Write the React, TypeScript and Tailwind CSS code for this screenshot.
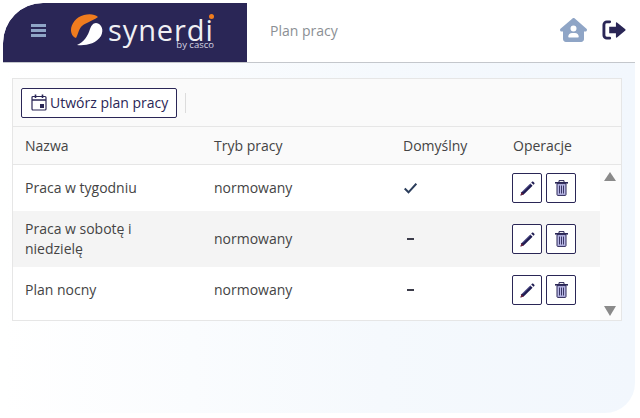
import { FaHouseUser } from "react-icons/fa6";

const rows = [
  { name: "Praca w tygodniu", mode: "normowany", isDefault: true, h: "h-[46px]", bg: "bg-white" },
  { name: "Praca w sobotę i niedzielę", mode: "normowany", isDefault: false, h: "h-[56px]", bg: "bg-[#f4f4f4]" },
  { name: "Plan nocny", mode: "normowany", isDefault: false, h: "h-[46px]", bg: "bg-white" },
];

const CalendarIcon = () => (
  <svg width="16" height="17" viewBox="0 0 16 17" fill="none" stroke="#2a2656" strokeWidth="1.2">
    <rect x="1" y="2.5" width="14" height="13.5" rx="1" />
    <path d="M1 6h14" strokeWidth="1.4" />
    <path d="M4.5 0.5v3.5M11.5 0.5v3.5" strokeWidth="1.6" />
    <rect x="9" y="10" width="4" height="4" fill="#2a2656" stroke="none" />
  </svg>
);

const LogoutIcon = () => (
  <svg width="24" height="22" viewBox="0 0 25 21">
    <path d="M8 2H5a3 3 0 0 0-3 3v11a3 3 0 0 0 3 3h3" fill="none" stroke="#2a2656" strokeWidth="3" strokeLinecap="round" />
    <path d="M7.5 7h7V3.2c0-.6.7-.9 1.1-.5l8.7 7.1c.4.4.4.9 0 1.3l-8.7 7.2c-.4.4-1.1.1-1.1-.5V14h-7z" fill="#2a2656" />
  </svg>
);

const PencilIcon = () => (
  <svg width="15" height="15" viewBox="0 0 15 15">
    <path d="M.5 14.5l.9-3.2 8.9-8.9 2.3 2.3-8.9 8.9z" fill="#1f1c52" />
    <path d="M2.6 10.8l8-8" stroke="#8f8cc8" strokeWidth="0.7" />
    <path d="M.5 14.5l.9-3.2 2.3 2.3z" fill="#6b1f3a" />
    <path d="M11.2 1.5l.8-.8c.4-.4.9-.4 1.3 0l1 1c.4.4.4.9 0 1.3l-.8.8z" fill="#1f1c52" />
  </svg>
);

const TrashIcon = () => (
  <svg width="13" height="16" viewBox="0 0 13 16">
    <path d="M4 2V.6h5V2" fill="none" stroke="#2a2656" strokeWidth="1" />
    <rect x="0" y="2" width="13" height="1.6" fill="#2a2656" />
    <path d="M2 3.6h9v11a.8.8 0 0 1-.8.8H2.8a.8.8 0 0 1-.8-.8z" fill="#b9b8e6" stroke="#2a2656" strokeWidth="1" />
    <path d="M4.5 5.5v8M6.5 5.5v8M8.5 5.5v8" stroke="#2a2656" strokeWidth="0.9" />
  </svg>
);

const CheckIcon = () => (
  <svg width="13" height="11" viewBox="0 0 13 11" fill="none" stroke="#2c3e5c" strokeWidth="2">
    <path d="M.7 5.5l3.8 3.8 7.8-8.6" />
  </svg>
);

const IconButton = ({ children }: { children: React.ReactNode }) => (
  <button className="flex h-[30px] w-[30px] items-center justify-center rounded-[2px] border border-[#2a2656] bg-white">
    {children}
  </button>
);

export default function App() {
  return (
    <div className="h-[418px] w-[640px] bg-white pb-[5px] pl-[3px] pr-[5px] pt-[3px] font-['Open_Sans',sans-serif] text-[14px] text-[#444]">
      <div className="h-[410px] overflow-hidden rounded-br-[30px] rounded-tl-[40px] bg-gradient-to-r from-white via-[#f5f9fd] via-60% to-[#f2f7fd]">
        <header className="flex h-[60px] items-stretch border-b border-[#c4c7cc] bg-white">
          <div className="flex h-[59px] w-[244px] items-center rounded-tl-[40px] bg-[#2a2656] pb-[4px]">
            <div className="ml-[28px] flex h-[13px] w-[15px] flex-col justify-between">
              <span className="h-[3px] bg-[#8fa5c6]" />
              <span className="h-[3px] bg-[#8fa5c6]" />
              <span className="h-[3px] bg-[#8fa5c6]" />
            </div>
            <svg className="ml-[25px]" width="33" height="33" viewBox="0 0 33 33">
              <path d="M27 3C24 0 18-.5 13 1 5 3 0 10 0 16c0 4 2 7 5 8 2-3 2-7 5-11 3-4 10-5 17-10z" fill="#f07c1e" />
              <path d="M6 31c8 1 19-1 24-9 3-6 1-12-5-13-3 0-5 3-6 6-2 7-6 13-13 16z" fill="#fff" />
            </svg>
            <div className="relative ml-[4px] mt-[-1px] w-[107px] leading-none">
              <span className="block text-[29px] font-normal leading-[30px] tracking-[0.9px] text-[#f0f0f4]">synerdi</span>
              <span className="absolute -bottom-[4px] right-[1px] text-[9.5px] leading-none text-[#d5d5e2]">by casco</span>
              <span className="absolute right-[1px] top-[-1px] h-[5px] w-[5px] rounded-full bg-[#f07c1e]" />
            </div>
          </div>
          <span className="ml-[23px] self-center pb-[4px] text-[14px] text-[#8b8f94]">Plan pracy</span>
          <div className="ml-auto flex items-center gap-[15px] pb-[5px] pr-[9px]">
            <FaHouseUser className="h-[24px] w-[27px] text-[#8fa5c6]" />
            <LogoutIcon />
          </div>
        </header>

        <main className="ml-[9px] mr-[13px] mt-[15px] flex h-[243px] flex-col border border-[#e6e6e6] bg-white">
          <div className="flex h-[48px] items-center border-b border-[#e6e6e6] bg-[#fafafa] pl-[8px]">
            <button className="flex h-[30px] w-[156px] items-center gap-[3px] rounded-[2px] border border-[#2a2656] bg-white pl-[9px] text-[14px] text-[#2a2656]">
              <CalendarIcon />
              Utwórz plan pracy
            </button>
            <span className="ml-[8px] h-[20px] w-px bg-[#dcdcdc]" />
          </div>

          <div className="flex h-[38px] items-center border-b border-[#e6e6e6] bg-[#fafafa] text-[#444]">
            <div className="w-[189px] pl-[12px]">Nazwa</div>
            <div className="w-[189px] pl-[12px]">Tryb pracy</div>
            <div className="w-[110px] pl-[12px]">Domyślny</div>
            <div className="pl-[12px]">Operacje</div>
          </div>

          <div className="flex flex-1">
            <div className="w-[587px]">
              {rows.map((row) => (
                <div key={row.name} className={`flex items-center ${row.h} ${row.bg}`}>
                  <div className="w-[189px] pl-[12px] pr-[24px] leading-[20px]">{row.name}</div>
                  <div className="w-[189px] pl-[12px] pb-[2px]">{row.mode}</div>
                  <div className="w-[121px] pl-[13px]">
                    {row.isDefault ? (
                      <CheckIcon />
                    ) : (
                      <span className="ml-[3px] block h-[2px] w-[7px] bg-[#3c3c4a]" />
                    )}
                  </div>
                  <div className="flex gap-[4px]">
                    <IconButton><PencilIcon /></IconButton>
                    <IconButton><TrashIcon /></IconButton>
                  </div>
                </div>
              ))}
            </div>
            <div className="flex flex-1 flex-col items-center justify-between bg-[#fcfcfc] pb-[4px] pl-0 pr-[1px] pt-[7px]">
              <span className="h-0 w-0 border-x-[6.5px] border-b-[9px] border-x-transparent border-b-[#8a8a8a]" />
              <span className="h-0 w-0 border-x-[6.5px] border-t-[10px] border-x-transparent border-t-[#8a8a8a]" />
            </div>
          </div>
        </main>
      </div>
    </div>
  );
}
